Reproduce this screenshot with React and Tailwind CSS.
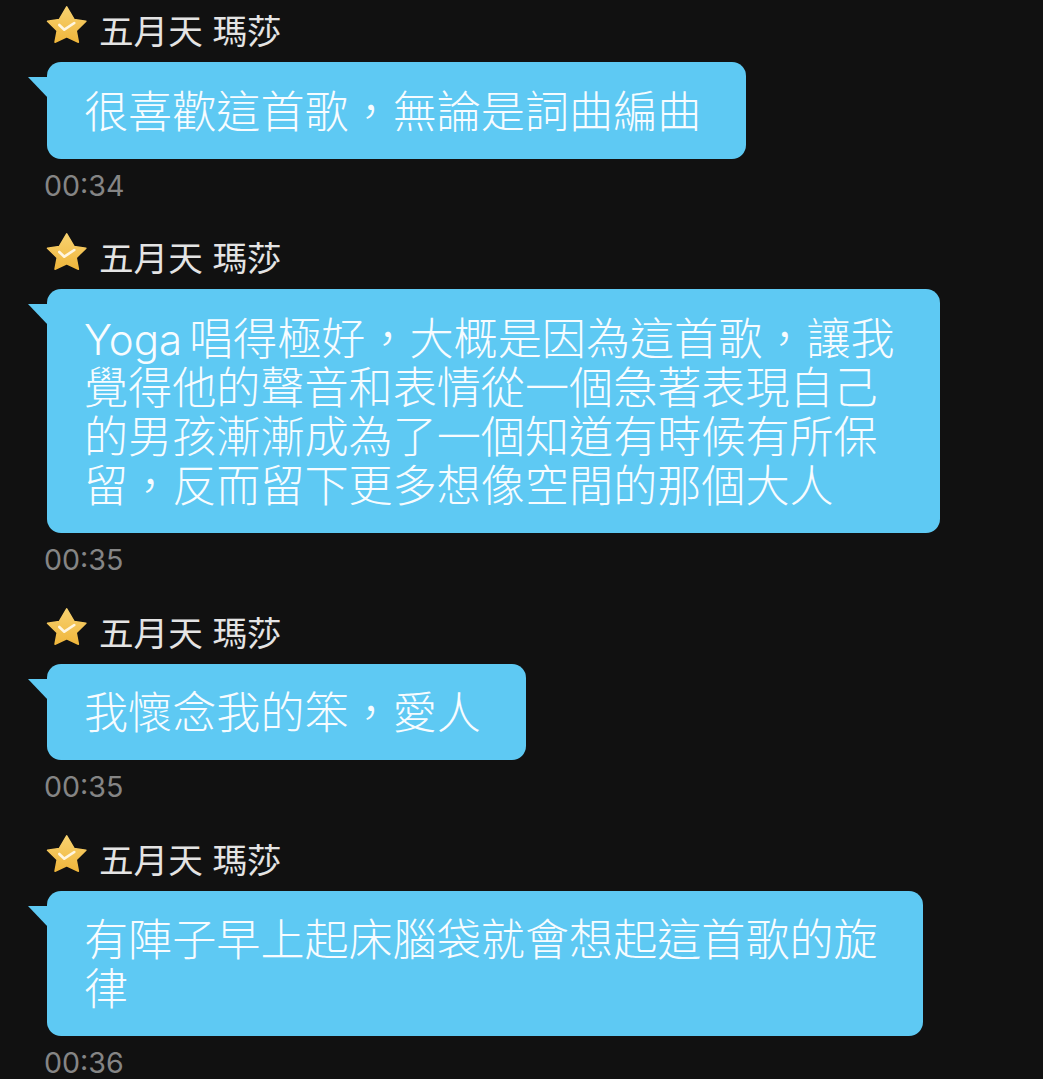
const messages = [
  { lines: ["很喜歡這首歌\uFF0C無論是詞曲編曲"], time: "00:34" },
  {
    lines: [
      <>
        <span className="mr-[11px] inline-block w-[94px] text-[42px]">Yoga</span>
        唱得極好{"\uFF0C"}大概是因為這首歌{"\uFF0C"}讓我
      </>,
      "覺得他的聲音和表情從一個急著表現自己",
      "的男孩漸漸成為了一個知道有時候有所保",
      "留\uFF0C反而留下更多想像空間的那個大人",
    ],
    time: "00:35",
  },
  { lines: ["我懷念我的笨\uFF0C愛人"], time: "00:35" },
  { lines: ["有陣子早上起床腦袋就會想起這首歌的旋", "律"], time: "00:36" },
];

const StarBadge = ({ id }) => (
  <svg width="42" height="42" viewBox="0 0 42 42" className="shrink-0">
    <defs>
      <linearGradient id={id} x1="0" y1="0" x2="0" y2="1">
        <stop offset="0" stopColor="#f8d270" />
        <stop offset="1" stopColor="#efb63c" />
      </linearGradient>
    </defs>
    <path
      d="M20.7 1.8 L28.2 14.6 L39.9 16.2 L30.2 25.6 L32.4 37.2 L20.7 31.8 L9 37.2 L11.2 25.6 L1.5 16.2 L13.2 14.6 Z"
      fill={`url(#${id})`}
      stroke={`url(#${id})`}
      strokeWidth="1.5"
      strokeLinejoin="round"
    />
    <path d="M13.3 20 L18.3 24.7 L28.3 18" fill="none" stroke="#fff6e0" strokeWidth="2.6" strokeLinecap="round" strokeLinejoin="round" />
  </svg>
);

const Message = ({ msg, index }) => (
  <div className="flex flex-col items-start">
    <div className="flex h-[40px] items-center pl-[46px]">
      <StarBadge id={`star-${index}`} />
      <span className="ml-[11px] pt-[10px] text-[34.6px] leading-[40px] text-[#e4e4e4]">五月天 瑪莎</span>
    </div>
    <div className="relative ml-[47px] mt-[16px] rounded-[14px] bg-[#5ec9f3] pb-[22px] pl-[37px] pr-[45px] pt-[25.5px]">
      <svg width="20" height="21" viewBox="0 0 20 21" className="absolute -left-[19px] top-[15px]">
        <path d="M0 0 L20 0 L20 21 Z" fill="#5ec9f3" />
      </svg>
      <p className="whitespace-nowrap text-[44.1px] font-light leading-[49px] text-[#f7fcff]">
        {msg.lines.map((line, i) => (
          <span key={i} className="block">{line}</span>
        ))}
      </p>
    </div>
    <div className="ml-[44px] mt-[12px] h-[30px] text-[28.6px] leading-[30px] text-[#858585]">{msg.time}</div>
  </div>
);

const App = () => (
  <div className="h-[1079px] w-[1043px] overflow-hidden bg-[#111111] pt-[6px] font-['Inter','Noto_Sans_CJK_TC',sans-serif]">
    <div className="flex flex-col gap-[32.75px]">
      {messages.map((msg, i) => (
        <Message key={i} msg={msg} index={i} />
      ))}
    </div>
  </div>
);

export default App;
